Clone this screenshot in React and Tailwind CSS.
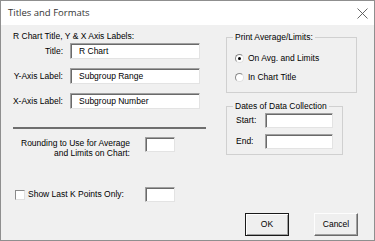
import React from "react";

const sunken =
  "bg-white border border-t-[#a0a0a0] border-l-[#a0a0a0] border-r-[#e3e3e3] border-b-[#e3e3e3] shadow-[inset_1px_1px_0_#6a6a6a]";

function TextBox({ className = "", value = "" }) {
  return (
    <div className={`${sunken} ${className} flex items-center pl-[8px] text-black leading-none whitespace-nowrap`}>
      {value}
    </div>
  );
}

function Radio({ checked }) {
  return (
    <div className="w-[9px] h-[9px] rounded-full bg-white border border-t-[#8a8a8a] border-l-[#8a8a8a] border-r-[#e0e0e0] border-b-[#e0e0e0] flex items-center justify-center">
      {checked && <div className="w-[3px] h-[3px] rounded-full bg-black" />}
    </div>
  );
}

function Label({ children }) {
  return <div className="w-[50px] flex justify-end whitespace-nowrap">{children}</div>;
}

export default function App() {
  return (
    <div
      className="w-[375px] h-[241px] border border-[#8f8f8f] bg-[#f0f0f0] flex flex-col overflow-hidden text-[8.5px] text-black"
      style={{ fontFamily: '"Liberation Sans", Arial, sans-serif' }}
    >
      <div className="h-[24px] bg-white flex items-center justify-between pl-[7px] pr-[6px] shrink-0">
        <span
          className="text-[9.5px] text-[#333]"
          style={{ fontFamily: '"Open Sans", "Noto Sans", sans-serif' }}
        >
          Titles and Formats
        </span>
        <svg width="11" height="11" viewBox="0 0 11 11" className="mt-[1px]">
          <path d="M0.5 0.5 L10.5 10.5 M10.5 0.5 L0.5 10.5" stroke="#555" strokeWidth="0.9" />
        </svg>
      </div>

      <div className="flex flex-1 pl-[12px]">
        {/* left column */}
        <div className="w-[195px] flex flex-col">
          <div className="mt-[6px] h-[11px] leading-[11px] whitespace-nowrap">R Chart Title, Y &amp; X Axis Labels:</div>
          <div className="mt-[1px] flex items-center h-[16px]">
            <Label>Title:</Label>
            <TextBox className="ml-[7px] w-[130px] h-[16px]" value="R Chart" />
          </div>
          <div className="mt-[9px] flex items-center h-[16px]">
            <Label>Y-Axis Label:</Label>
            <TextBox className="ml-[7px] w-[130px] h-[16px]" value="Subgroup Range" />
          </div>
          <div className="mt-[9px] flex items-center h-[16px]">
            <Label>X-Axis Label:</Label>
            <TextBox className="ml-[7px] w-[130px] h-[16px]" value="Subgroup Number" />
          </div>
          <div className="mt-[18px] w-[193px] h-[2px] bg-[#6e6e6e]" />
          <div className="mt-[8px] flex items-start">
            <div className="w-[117px] text-right leading-[10px] mt-[1px] whitespace-nowrap">
              Rounding to Use for Average
              <br />
              and Limits on Chart:
            </div>
            <TextBox className="ml-[15px] w-[30px] h-[15px]" />
          </div>
          <div className="mt-[29px] flex items-center h-[15px]">
            <div className="w-[132px] flex items-center">
              <div className="ml-[2px] w-[10px] h-[10px] bg-white border border-t-[#8a8a8a] border-l-[#8a8a8a] border-r-[#e0e0e0] border-b-[#e0e0e0]" />
              <span className="ml-[3px] whitespace-nowrap">Show Last K Points Only:</span>
            </div>
            <TextBox className="w-[30px] h-[15px]" />
          </div>
        </div>

        {/* right column */}
        <div className="ml-[18px] flex flex-col">
          <fieldset className="mt-[7px] w-[131px] h-[61px] border border-[#d0d0d0] px-[8px]">
            <legend className="ml-[-2px] px-[2px] leading-[10px]">Print Average/Limits:</legend>
            <div className="mt-[10px] flex items-center h-[12px]">
              <Radio checked />
              <span className="ml-[4px]">On Avg. and Limits</span>
            </div>
            <div className="mt-[7px] flex items-center h-[12px]">
              <Radio />
              <span className="ml-[4px]">In Chart Title</span>
            </div>
          </fieldset>
          <fieldset className="mt-[8px] w-[117px] h-[54px] border border-[#d0d0d0] px-[9px]">
            <legend className="ml-[-3px] px-[2px] leading-[10px]">Dates of Data Collection</legend>
            <div className="mt-[2px] flex items-center h-[15px]">
              <div className="w-[29px]">Start:</div>
              <TextBox className="w-[68px] h-[15px]" />
            </div>
            <div className="mt-[6px] flex items-center h-[15px]">
              <div className="w-[29px]">End:</div>
              <TextBox className="w-[68px] h-[15px]" />
            </div>
          </fieldset>
          <div className="mt-[58px] flex">
            <div className="ml-[19px] w-[44px] h-[23px] border border-[#1a1a1a] bg-[#efefef] shadow-[inset_1px_1px_0_#ffffff,inset_-1px_-1px_0_#a0a0a0] flex items-center justify-center">
              OK
            </div>
            <div className="ml-[25px] w-[44px] h-[23px] bg-[#efefef] border border-t-[#fdfdfd] border-l-[#fdfdfd] border-r-[#6a6a6a] border-b-[#6a6a6a] shadow-[inset_-1px_-1px_0_#a0a0a0] flex items-center justify-center">
              Cancel
            </div>
          </div>
        </div>
      </div>
    </div>
  );
}
